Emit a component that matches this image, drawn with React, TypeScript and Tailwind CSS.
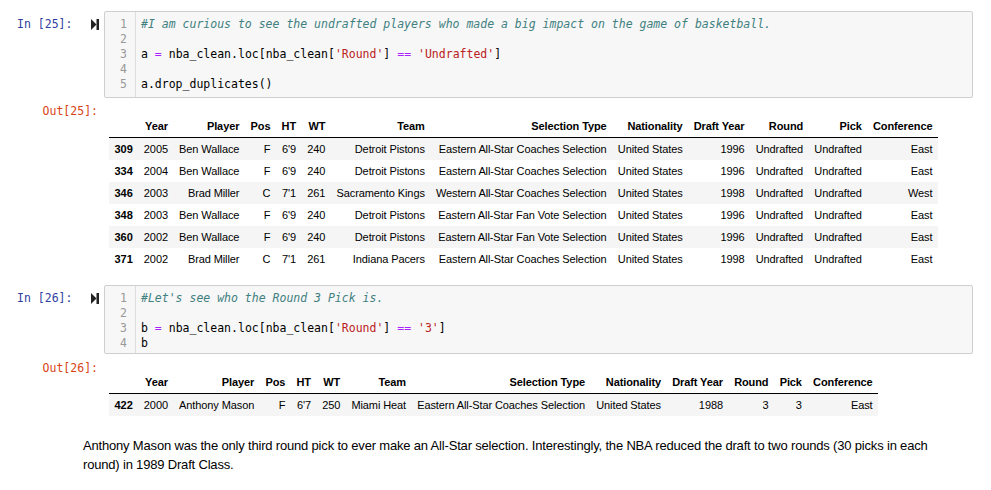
import React from 'react';

type Row = string[];

const mono = { fontFamily: '"DejaVu Sans Mono", monospace' };

const RunIcon = () => (
  <svg width="8" height="11" viewBox="0 0 8 11" className="block">
    <polygon points="0,0 5.5,5.5 0,11" fill="#222" />
    <rect x="5.5" y="0" width="2.5" height="11" fill="#222" />
  </svg>
);

const Str = ({ children }: { children: React.ReactNode }) => <span className="text-[#BA2121]">{children}</span>;
const Op = ({ children }: { children: React.ReactNode }) => <span className="text-[#AA22FF]">{children}</span>;
const Comment = ({ children }: { children: React.ReactNode }) => <span className="italic text-[#408080]">{children}</span>;

const CodeCell = ({ n, lines, pb }: { n: number; lines: React.ReactNode[]; pb: string }) => (
  <div className="flex">
    <div className="w-[104px] shrink-0 flex items-start pt-[6px] pl-[17px] pr-[5px] text-[11.5px] leading-[15px] text-[#303F9F]" style={mono}>
      <span>In [{n}]:</span>
      <span className="ml-auto mt-[2px]">
        <RunIcon />
      </span>
    </div>
    <div className="w-[869px] flex border border-[#cfcfcf] bg-[#f7f7f7] rounded-[2px] text-[11.5px] leading-[15px]" style={mono}>
      <div className={`w-[31px] shrink-0 border-r border-[#ddd] text-right pr-[8px] pt-[5px] text-[#999] ${pb}`}>
        {lines.map((_, i) => (
          <div key={i} className="h-[15px]">{i + 1}</div>
        ))}
      </div>
      <div className={`pl-[5px] pt-[5px] text-black whitespace-pre ${pb}`}>
        {lines.map((l, i) => (
          <div key={i} className="h-[15px]">{l}</div>
        ))}
      </div>
    </div>
  </div>
);

const headers = ['', 'Year', 'Player', 'Pos', 'HT', 'WT', 'Team', 'Selection Type', 'Nationality', 'Draft Year', 'Round', 'Pick', 'Conference'];

const DataFrame = ({ rows }: { rows: Row[] }) => (
  <table
    className="border-collapse text-[11px] tracking-[-0.1px] leading-[14px] text-black"
    style={{ fontFamily: '"Liberation Sans", Arial, sans-serif' }}
  >
    <thead className="border-b border-black">
      <tr>
        {headers.map((h, i) => (
          <th key={i} className="text-right font-bold px-[5.6px] py-[4px] whitespace-nowrap">{h}</th>
        ))}
      </tr>
    </thead>
    <tbody>
      {rows.map((r, ri) => (
        <tr key={ri} className={ri % 2 === 0 ? 'bg-[#f5f5f5]' : 'bg-white'}>
          {r.map((c, ci) =>
            ci === 0 ? (
              <th key={ci} className="text-right font-bold px-[5.6px] py-[4px] whitespace-nowrap">{c}</th>
            ) : (
              <td key={ci} className="text-right px-[5.6px] py-[4px] whitespace-nowrap">{c}</td>
            )
          )}
        </tr>
      ))}
    </tbody>
  </table>
);

const OutPrompt = ({ n, pt }: { n: number; pt: string }) => (
  <div className={`w-[104px] shrink-0 text-right pr-[6px] text-[11.5px] leading-[15px] text-[#D84315] ${pt}`} style={mono}>
    Out[{n}]:
  </div>
);

const undrafted: Row[] = [
  ['309', '2005', 'Ben Wallace', 'F', "6'9", '240', 'Detroit Pistons', 'Eastern All-Star Coaches Selection', 'United States', '1996', 'Undrafted', 'Undrafted', 'East'],
  ['334', '2004', 'Ben Wallace', 'F', "6'9", '240', 'Detroit Pistons', 'Eastern All-Star Coaches Selection', 'United States', '1996', 'Undrafted', 'Undrafted', 'East'],
  ['346', '2003', 'Brad Miller', 'C', "7'1", '261', 'Sacramento Kings', 'Western All-Star Coaches Selection', 'United States', '1998', 'Undrafted', 'Undrafted', 'West'],
  ['348', '2003', 'Ben Wallace', 'F', "6'9", '240', 'Detroit Pistons', 'Eastern All-Star Fan Vote Selection', 'United States', '1996', 'Undrafted', 'Undrafted', 'East'],
  ['360', '2002', 'Ben Wallace', 'F', "6'9", '240', 'Detroit Pistons', 'Eastern All-Star Fan Vote Selection', 'United States', '1996', 'Undrafted', 'Undrafted', 'East'],
  ['371', '2002', 'Brad Miller', 'C', "7'1", '261', 'Indiana Pacers', 'Eastern All-Star Coaches Selection', 'United States', '1998', 'Undrafted', 'Undrafted', 'East'],
];

const roundThree: Row[] = [
  ['422', '2000', 'Anthony Mason', 'F', "6'7", '250', 'Miami Heat', 'Eastern All-Star Coaches Selection', 'United States', '1988', '3', '3', 'East'],
];

export default function App() {
  return (
    <div className="w-[991px] h-[490px] bg-white overflow-hidden pt-[11px]">
      <CodeCell
        n={25}
        pb="pb-[5px]"
        lines={[
          <Comment>#I am curious to see the undrafted players who made a big impact on the game of basketball.</Comment>,
          '',
          <>a <Op>=</Op> nba_clean.loc[nba_clean[<Str>'Round'</Str>] <Op>==</Op> <Str>'Undrafted'</Str>]</>,
          '',
          'a.drop_duplicates()',
        ]}
      />
      <div className="flex">
        <OutPrompt n={25} pt="pt-[6px]" />
        <div className="pl-[5px] pt-[17px]">
          <DataFrame rows={undrafted} />
        </div>
      </div>

      <div className="mt-[15px]">
        <CodeCell
          n={26}
          pb="pb-[2px]"
          lines={[
            <Comment>#Let's see who the Round 3 Pick is.</Comment>,
            '',
            <>b <Op>=</Op> nba_clean.loc[nba_clean[<Str>'Round'</Str>] <Op>==</Op> <Str>'3'</Str>]</>,
            'b',
          ]}
        />
      </div>
      <div className="flex">
        <OutPrompt n={26} pt="pt-[7px]" />
        <div className="pl-[5px] pt-[17px]">
          <DataFrame rows={roundThree} />
        </div>
      </div>

      <p
        className="mt-[20px] ml-[83px] w-[862px] text-[13px] tracking-[-0.18px] leading-[19px] text-black"
        style={{ fontFamily: '"Liberation Sans", Arial, sans-serif' }}
      >
        Anthony Mason was the only third round pick to ever make an All-Star selection. Interestingly, the NBA reduced the draft to two rounds (30 picks in each round) in 1989 Draft Class.
      </p>
    </div>
  );
}
